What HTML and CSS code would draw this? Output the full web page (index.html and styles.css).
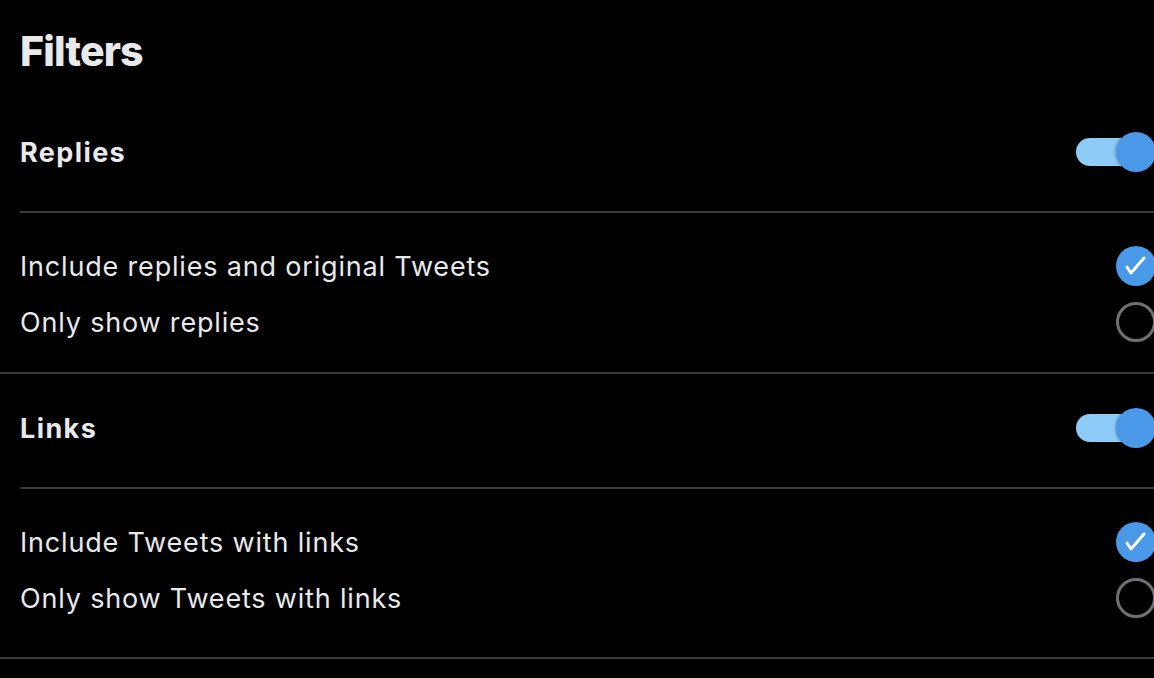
FILE: index.html
```html
<!DOCTYPE html>
<html lang="en">
<head>
    <meta charset="UTF-8">
    <meta name="viewport" content="width=device-width, initial-scale=1.0">
    <title>Filters</title>
    <link rel="stylesheet" href="styles.css">
</head>
<body>
    <div class="page">
        <h1 class="title">Filters</h1>

        <div class="section">
            <div class="section-head">
                <span class="head-label">Replies</span>
                <div class="toggle on">
                    <div class="track"></div>
                    <div class="knob"></div>
                </div>
            </div>
            <div class="options">
                <div class="option">
                    <span>Include replies and original Tweets</span>
                    <svg class="radio checked" viewBox="0 0 40 40" width="40" height="40">
                        <circle cx="20" cy="20" r="20" fill="#4a98e8"/>
                        <polyline points="11,21 15,27 28,12" fill="none" stroke="#fff" stroke-width="3" stroke-linecap="round" stroke-linejoin="round"/>
                    </svg>
                </div>
                <div class="option">
                    <span>Only show replies</span>
                    <div class="radio empty"></div>
                </div>
            </div>
        </div>

        <div class="section">
            <div class="section-head">
                <span class="head-label">Links</span>
                <div class="toggle on">
                    <div class="track"></div>
                    <div class="knob"></div>
                </div>
            </div>
            <div class="options last">
                <div class="option">
                    <span>Include Tweets with links</span>
                    <svg class="radio checked" viewBox="0 0 40 40" width="40" height="40">
                        <circle cx="20" cy="20" r="20" fill="#4a98e8"/>
                        <polyline points="11,21 15,27 28,12" fill="none" stroke="#fff" stroke-width="3" stroke-linecap="round" stroke-linejoin="round"/>
                    </svg>
                </div>
                <div class="option">
                    <span>Only show Tweets with links</span>
                    <div class="radio empty"></div>
                </div>
            </div>
        </div>
    </div>
</body>
</html>
```

FILE: styles.css
```css
body {
    margin: 0;
    padding: 0;
    background-color: #000;
    color: #e7e9ea;
    font-family: Inter, "Noto Sans", sans-serif;
    overflow: hidden;
}
.page {
    width: 1156px;
}
.title {
    margin: 0;
    height: 94px;
    padding: 4px 0 0 20px;
    display: flex;
    align-items: center;
    font-size: 41px;
    font-weight: 800;
    line-height: 1;
    letter-spacing: -0.8px;
}
.section {
    border-bottom: 2px solid #3a3d40;
}
.section-head {
    margin-left: 20px;
    height: 108px;
    padding-bottom: 5px;
    border-bottom: 2px solid #3a3d40;
    display: flex;
    align-items: center;
    justify-content: space-between;
}
.head-label {
    font-size: 27px;
    font-weight: 700;
    line-height: 1;
    letter-spacing: 1.4px;
}
.options {
    padding: 25px 0 22px 20px;
}
.options.last {
    padding-bottom: 31px;
}
.option {
    height: 56px;
    display: flex;
    align-items: center;
    justify-content: space-between;
    font-size: 27px;
    line-height: 1;
    letter-spacing: 0.82px;
}
.radio {
    width: 40px;
    height: 40px;
    flex-shrink: 0;
    display: block;
}
.radio.empty {
    box-sizing: border-box;
    border: 3px solid #6e7073;
    border-radius: 50%;
}
.toggle {
    position: relative;
    width: 80px;
    height: 40px;
}
.track {
    position: absolute;
    left: 0;
    top: 6px;
    width: 70px;
    height: 28px;
    border-radius: 14px;
    background-color: #8ecbf6;
}
.knob {
    position: absolute;
    right: 0;
    top: 0;
    width: 40px;
    height: 40px;
    border-radius: 50%;
    background-color: #4a98e8;
    box-shadow: -1px 0 3px rgba(0, 0, 0, 0.25);
}
```
